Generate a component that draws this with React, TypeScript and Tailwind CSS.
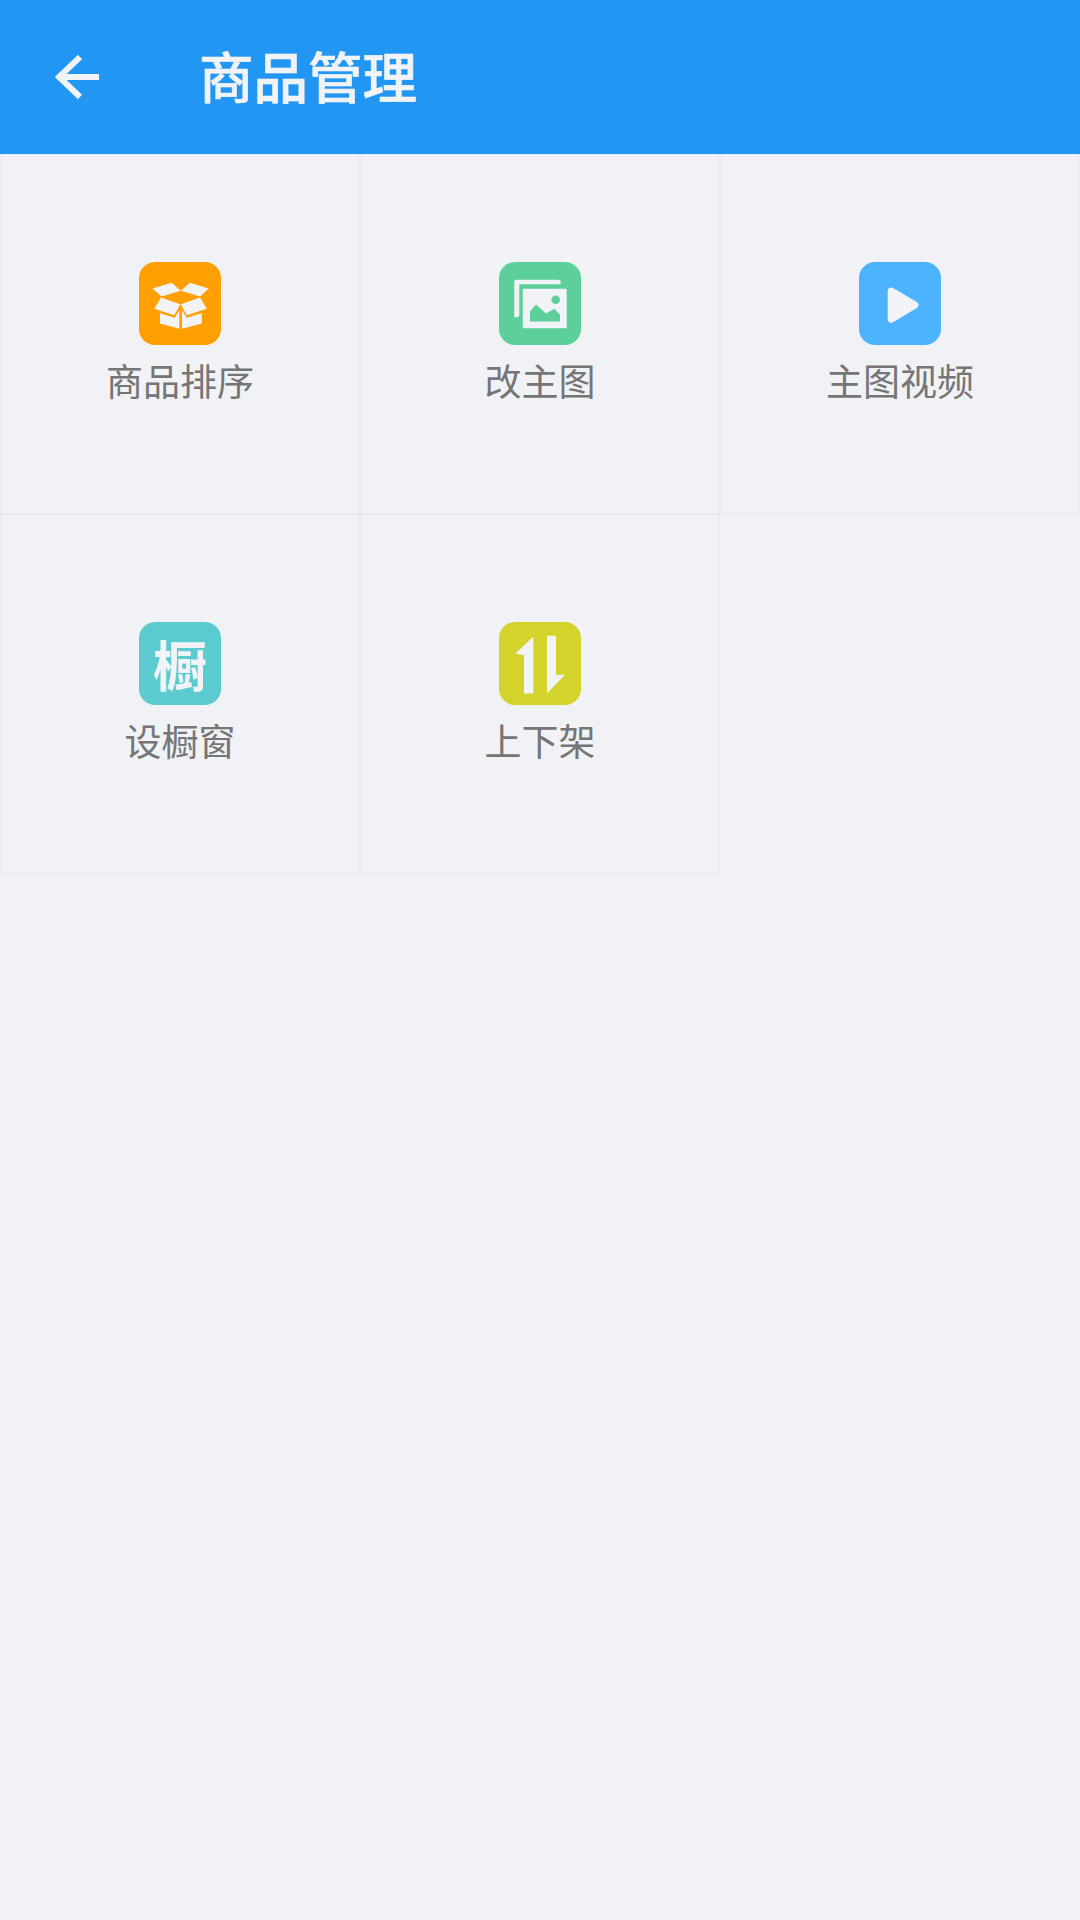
import { ReactNode } from 'react';

const FONT = 'font-["Noto_Sans_CJK_SC","Noto_Sans",sans-serif]';
const ICON_FG = '#f1f3f7';

function BoxIcon() {
    return (
        <svg viewBox="0 0 82 82" className="w-full h-full" fill={ICON_FG}>
            <polygon points="13.3,26 32.7,20.3 41.7,28.3 22.7,34" />
            <polygon points="41.7,28.3 51,20.3 69.7,26 61,34" />
            <polygon points="22,35 41.3,41.7 35.3,52.7 15.3,46.3" />
            <polygon points="61,35 41.7,41.7 47.7,52.7 67.7,46.3" />
            <polygon points="21,50.7 35.7,55.3 40.3,47.7 40.3,66.3 21,61" />
            <polygon points="43,47.7 47.7,55.3 62.7,50.7 62.7,61 43,66.3" />
        </svg>
    );
}

function ImageIcon() {
    return (
        <svg viewBox="0 0 82 82" className="w-full h-full">
            <path
                d="M15.3 19.3a2 2 0 0 1 2-2h42.4a2 2 0 0 1 2 2v2.4H20.3v31a2 2 0 0 1-2 2h-3z"
                fill={ICON_FG}
            />
            <rect x="23.7" y="26.3" width="44" height="39.4" rx="1" fill={ICON_FG} />
            <polygon points="31,59 31,49 37,42 47,51 55.3,46.3 61,52.3 61,59" fill="#5ccf9b" />
            <circle cx="56.7" cy="37.3" r="4.3" fill="#5ccf9b" />
        </svg>
    );
}

function PlayIcon() {
    return (
        <svg viewBox="0 0 82 82" className="w-full h-full">
            <polygon
                points="32.2,28.4 56,42.6 32.2,56.8"
                fill={ICON_FG}
                stroke={ICON_FG}
                strokeWidth="7"
                strokeLinejoin="round"
            />
        </svg>
    );
}

function ArrowsIcon() {
    return (
        <svg viewBox="0 0 82 82" className="w-full h-full" fill={ICON_FG}>
            <polygon points="16.3,31 34.3,14.3 34.3,71 25,71 25,32.7" />
            <polygon points="48,13.3 57,13.3 57,52.3 66,52.3 48,71" />
        </svg>
    );
}

const items: { label: string; bg: string; icon: ReactNode }[] = [
    { label: '商品排序', bg: 'bg-[#ff9f00]', icon: <BoxIcon /> },
    { label: '改主图', bg: 'bg-[#5ccf9b]', icon: <ImageIcon /> },
    { label: '主图视频', bg: 'bg-[#4db3ff]', icon: <PlayIcon /> },
    {
        label: '设橱窗',
        bg: 'bg-[#5bcbcf]',
        icon: <span className="text-[54px] font-bold leading-none text-[#f1f3f7]">橱</span>,
    },
    { label: '上下架', bg: 'bg-[#d4d32c]', icon: <ArrowsIcon /> },
];

export default function App() {
    return (
        <div className={`w-[1080px] h-[1920px] bg-[#f0f2f6] ${FONT}`}>
            {/* Header */}
            <div className="h-[154px] bg-[#2196f3] flex items-center">
                <svg viewBox="0 0 44 44" className="ml-[55px] w-[44px] h-[44px]" fill="none" stroke="#f1f3f7" strokeWidth="6">
                    <path d="M25 2 L4 22 L25 42" />
                    <path d="M4 22 H44" />
                </svg>
                <span className="ml-[100px] -mt-[4px] text-[54.5px] font-medium leading-none text-[#f1f3f7] [-webkit-text-stroke:0.6px_#f1f3f7]">
                    商品管理
                </span>
            </div>

            {/* Grid */}
            <div className="grid grid-cols-3">
                {items.map(item => (
                    <div
                        key={item.label}
                        className="h-[360px] border border-[#e9eaed] flex flex-col items-center pt-[107px]"
                    >
                        <div className={`w-[82px] h-[83px] rounded-[16px] flex items-center justify-center ${item.bg}`}>
                            {item.icon}
                        </div>
                        <span className="mt-[10px] text-[37px] leading-[50px] text-[#757575]">{item.label}</span>
                    </div>
                ))}
            </div>
        </div>
    );
}
